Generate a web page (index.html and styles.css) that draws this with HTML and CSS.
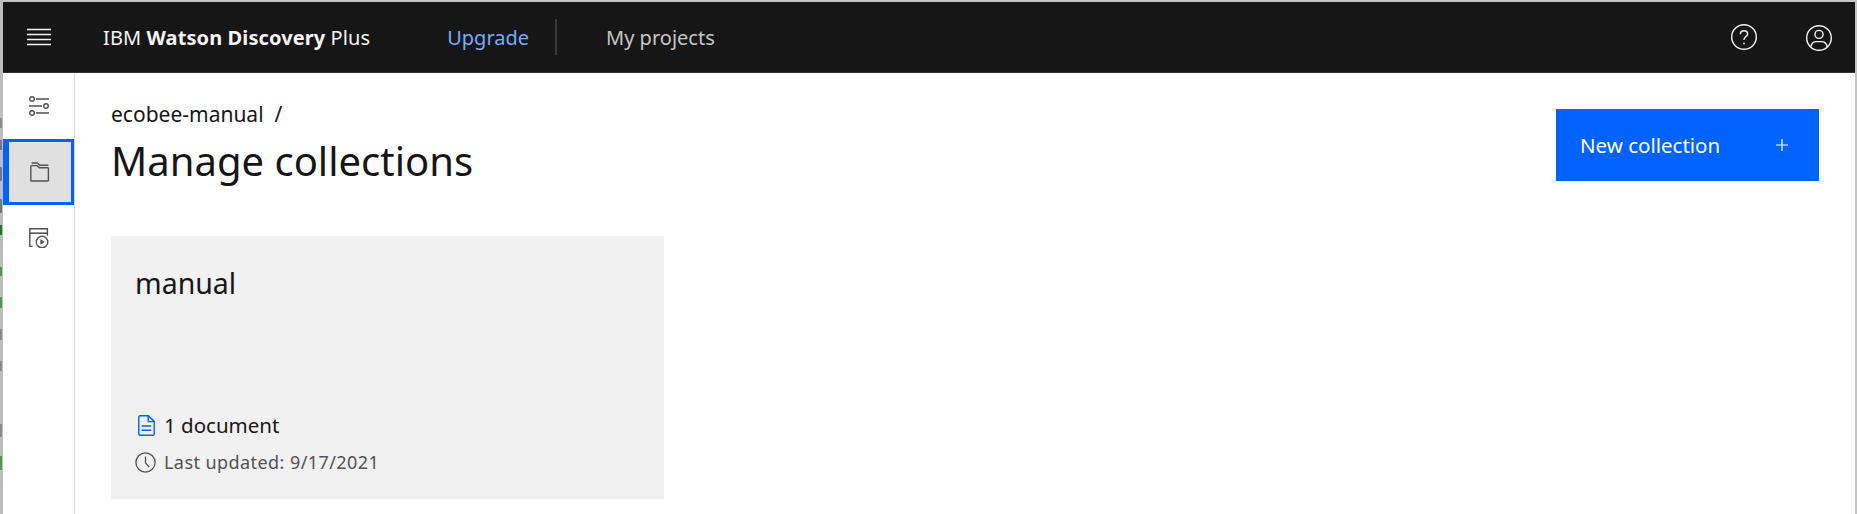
FILE: index.html
```html
<!DOCTYPE html>
<html lang="en">
<head>
    <meta charset="UTF-8">
    <title>Manage collections</title>
    <link rel="stylesheet" href="styles.css">
</head>
<body>
    <div class="gutter"></div>
    <div class="frame">
        <header class="topbar">
            <button class="menu-btn" aria-label="Menu">
                <svg width="24" height="24" viewBox="0 0 24 24"><path d="M0 1h24M0 6h24M0 11h24M0 16h24" transform="translate(0 3.5)" stroke="#f4f4f4" stroke-width="1.3" fill="none"/></svg>
            </button>
            <div class="brand">IBM <b>Watson Discovery</b> Plus</div>
            <a class="upgrade">Upgrade</a>
            <span class="divider"></span>
            <a class="projects">My projects</a>
            <div class="top-icons">
                <svg width="28" height="28" viewBox="0 0 28 28" fill="none" stroke="#f4f4f4" stroke-width="1.4"><circle cx="14" cy="14" r="12.3"/><path d="M10.4 11.2c0-2.2 1.6-3.5 3.6-3.5s3.6 1.2 3.6 3.2c0 2.8-3.6 2.7-3.6 5.6v.6"/><circle cx="14" cy="20.4" r=".9" fill="#f4f4f4" stroke="none"/></svg>
                <svg class="user-icon" width="28" height="28" viewBox="0 0 28 28" fill="none" stroke="#f4f4f4" stroke-width="1.4"><circle cx="14" cy="14" r="12.3"/><circle cx="14" cy="10.4" r="4"/><path d="M5.8 23c.6-3.6 3-5.4 5.6-5.4h5.2c2.6 0 5 1.8 5.6 5.4"/></svg>
            </div>
        </header>
        <div class="below">
            <nav class="sidebar">
                <a class="side-item">
                    <svg width="20" height="20" viewBox="0 0 20 20" fill="none" stroke="#525252" stroke-width="1.4"><path d="M7 3h13M0 10h13M7 17h13"/><circle cx="3" cy="3" r="2.3"/><circle cx="17" cy="10" r="2.3"/><circle cx="3" cy="17" r="2.3"/></svg>
                </a>
                <a class="side-item active">
                    <svg width="20" height="20" viewBox="0 0 20 20" fill="none" stroke="#525252" stroke-width="1.4"><path d="M1.6 19h16a.8.8 0 0 0 .8-.8V6.6a.8.8 0 0 0-.8-.8H9.6L7 3.6H1.6a.8.8 0 0 0-.8.8v13.8c0 .4.4.8.8.8z"/><path d="M1.6 1h5.6l2.6 2.2h8.6"/></svg>
                </a>
                <a class="side-item">
                    <svg width="20" height="20" viewBox="0 0 20 20" fill="none" stroke="#525252" stroke-width="1.4"><path d="M3.6 18.4H.8V.8h17.6v7"/><path d="M.8 5.2h17.6" stroke-width="1.6"/><circle cx="13" cy="14" r="5.8"/><path d="M11.4 11.2v5.6l4.4-2.8z" fill="#525252" stroke="none"/></svg>
                </a>
            </nav>
            <main class="content">
                <div class="page-head">
                    <div>
                        <div class="crumb"><span>ecobee-manual</span><span class="slash">/</span></div>
                        <h1>Manage collections</h1>
                    </div>
                    <button class="new-btn"><span>New collection</span><span class="plus">
                        <svg width="12" height="12" viewBox="0 0 12 12"><path d="M6 0v12M0 6h12" stroke="#fff" stroke-width="1.2"/></svg>
                    </span></button>
                </div>
                <section class="card">
                    <h2>manual</h2>
                    <div class="card-foot">
                        <div class="doc-row">
                            <svg class="row-icon" width="17" height="21" viewBox="0 0 17 21" fill="none" stroke="#0062ff" stroke-width="1.4"><path d="M2 .8h8.4l5.8 5.6V19a1.2 1.2 0 0 1-1.2 1.2H2A1.2 1.2 0 0 1 .8 19V2A1.2 1.2 0 0 1 2 .8z"/><path d="M10.2 1v5.6h6M3.6 11h9.6M3.6 15.2h9.6"/></svg>
                            <span>1 document</span>
                        </div>
                        <div class="date-row">
                            <svg class="row-icon" width="21" height="21" viewBox="0 0 21 21" fill="none" stroke="#525252" stroke-width="1.3"><circle cx="10.5" cy="10.5" r="9.6"/><path d="M10.5 4.4v6.4l3.6 4.2"/></svg>
                            <span>Last updated: 9/17/2021</span>
                        </div>
                    </div>
                </section>
            </main>
        </div>
    </div>
</body>
</html>
```
FILE: styles.css
```css
* {
    box-sizing: border-box;
}

html, body {
    height: 100%;
}

body {
    margin: 0;
    overflow: hidden;
    display: flex;
    background-color: #c4c4c4;
    font-family: "Noto Sans", Roboto, Arial, sans-serif;
    color: #161616;
}

/* sliver of the window behind, cut off at the edge */
.gutter {
    width: 3px;
    flex-shrink: 0;
    background-color: #bdbdbd;
    background-repeat: no-repeat;
    background-size: 2px 100%;
    background-image: linear-gradient(to bottom,
        transparent 118px, #8a8a8a 118px, #8a8a8a 128px,
        transparent 128px, transparent 140px, #777 140px, #777 150px,
        transparent 150px, transparent 167px, #777 167px, #777 181px,
        transparent 181px, transparent 199px, #777 199px, #777 213px,
        transparent 213px, transparent 225px, #1b7a1b 225px, #1b7a1b 235px,
        transparent 235px, transparent 267px, #4f9a4f 267px, #4f9a4f 276px,
        transparent 276px, transparent 297px, #4f9a4f 297px, #4f9a4f 308px,
        transparent 308px, transparent 329px, #8a8a8a 329px, #8a8a8a 340px,
        transparent 340px, transparent 361px, #8a8a8a 361px, #8a8a8a 371px,
        transparent 371px, transparent 424px, #8a8a8a 424px, #8a8a8a 437px,
        transparent 437px, transparent 456px, #4f9a4f 456px, #4f9a4f 470px,
        transparent 470px);
}

.frame {
    flex: 1;
    min-width: 0;
    margin: 2px 2px 0 0;
    background-color: #fff;
    display: flex;
    flex-direction: column;
}

.topbar {
    height: 71px;
    flex-shrink: 0;
    background-color: #161616;
    border-bottom: 1px solid #333;
    display: flex;
    align-items: center;
    color: #f4f4f4;
}

.menu-btn {
    width: 24px;
    height: 24px;
    padding: 0;
    margin-left: 24px;
    border: none;
    background: none;
}

.brand {
    margin-left: 52px;
    font-size: 20px;
    font-weight: 400;
    letter-spacing: 0.1px;
}

.brand b {
    font-weight: 700;
}

.upgrade {
    margin-left: 77px;
    font-size: 20px;
    color: #78a9ff;
}

.divider {
    width: 2px;
    height: 36px;
    margin-left: 26px;
    background-color: #393939;
}

.projects {
    margin-left: 49px;
    font-size: 20px;
    color: #c6c6c6;
}

.top-icons {
    margin-left: auto;
    margin-right: 22px;
    display: flex;
    gap: 47px;
}

.user-icon {
    margin-top: 1px;
}

.below {
    flex: 1;
    display: flex;
    min-height: 0;
}

.sidebar {
    width: 72px;
    flex-shrink: 0;
    border-right: 1px solid #d8d8d8;
}

.side-item {
    height: 66px;
    display: flex;
    align-items: center;
    justify-content: center;
}

.side-item.active {
    background-color: #e0e0e0;
    border: 3px solid #0062ff;
    border-left-width: 6px;
}

.content {
    flex: 1;
    min-width: 0;
    padding: 28px 36px 0 36px;
}

.page-head {
    display: flex;
    justify-content: space-between;
    align-items: flex-start;
}

.crumb {
    font-size: 21px;
    line-height: 24px;
    padding-top: 1px;
    display: flex;
    gap: 11px;
}

h1 {
    margin: 9px 0 0;
    font-size: 40px;
    line-height: 52px;
    font-weight: 400;
}

.new-btn {
    width: 263px;
    height: 72px;
    margin-top: 8px;
    padding: 0 31px 0 24px;
    border: none;
    background-color: #0062ff;
    color: #fff;
    font-family: inherit;
    font-size: 20.5px;
    display: flex;
    align-items: center;
    justify-content: space-between;
}

.plus {
    display: flex;
}

.card {
    width: 553px;
    height: 263px;
    margin-top: 49px;
    padding: 29px 24px 0;
    background-color: #f1f1f1;
    display: flex;
    flex-direction: column;
}

h2 {
    margin: 0;
    font-size: 28.5px;
    line-height: 36px;
    font-weight: 400;
}

.card-foot {
    margin-top: auto;
    padding-bottom: 26px;
}

.doc-row {
    display: flex;
    align-items: center;
    gap: 9px;
    font-size: 20.5px;
    line-height: 24px;
    padding-left: 3px;
}

.date-row {
    display: flex;
    align-items: center;
    gap: 8px;
    margin-top: 14px;
    font-size: 18px;
    letter-spacing: 0.43px;
    line-height: 22px;
    color: #525252;
}
```
